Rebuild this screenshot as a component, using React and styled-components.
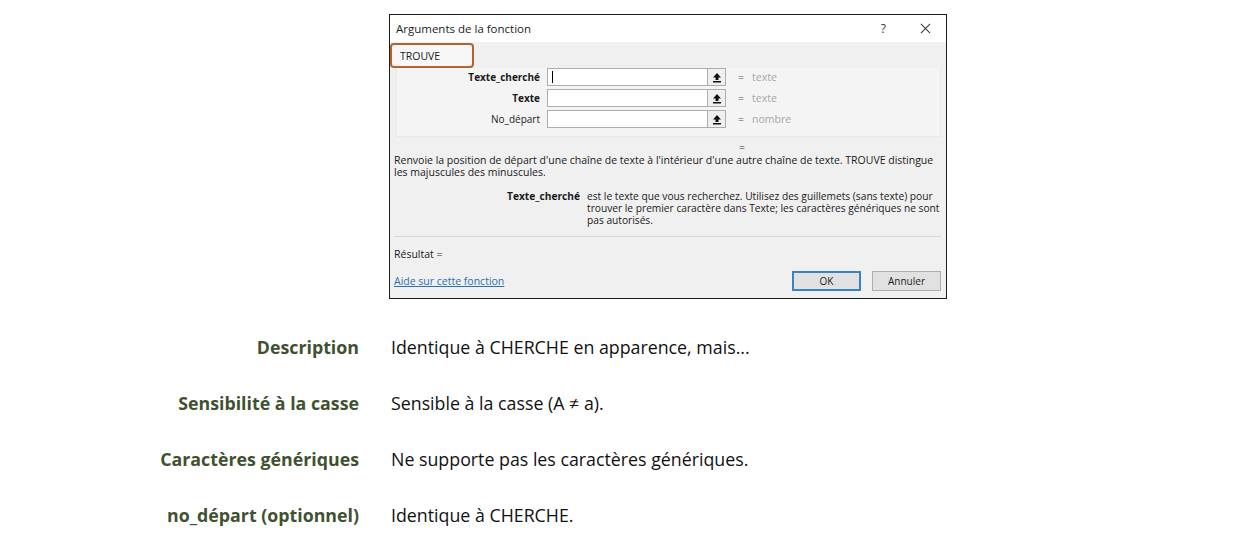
import React from "react";
import styled, { createGlobalStyle } from "styled-components";

const GlobalStyle = createGlobalStyle`
  body {
    margin: 0;
    background: #ffffff;
    font-family: "Open Sans", "Noto Sans", sans-serif;
  }
`;

const args = [
  { name: "Texte_cherché", bold: true, value: "texte", focused: true },
  { name: "Texte", bold: true, value: "texte" },
  { name: "No_départ", bold: false, value: "nombre" },
];

const rows = [
  { label: "Description", text: "Identique à CHERCHE en apparence, mais..." },
  { label: "Sensibilité à la casse", text: "Sensible à la casse (A ≠ a)." },
  { label: "Caractères génériques", text: "Ne supporte pas les caractères génériques." },
  { label: "no_départ (optionnel)", text: "Identique à CHERCHE." },
];

const UpArrow = () => (
  <svg width="10" height="11" viewBox="0 0 10 11">
    <path d="M5 1 L9 5.5 H6.5 V8 H3.5 V5.5 H1 Z" fill="#111" />
    <rect x="1" y="9" width="8" height="1.5" fill="#111" />
  </svg>
);

const App = () => {
  return (
    <Page>
      <GlobalStyle />
      <Dialog>
        <TitleBar>
          <Title>Arguments de la fonction</Title>
          <TitleButtons>
            <span>?</span>
            <CloseIcon viewBox="0 0 12 12">
              <path d="M1 1 L11 11 M11 1 L1 11" stroke="#333" strokeWidth="1.1" />
            </CloseIcon>
          </TitleButtons>
        </TitleBar>
        <Body>
          <FunctionName>TROUVE</FunctionName>
          <ArgPanel>
            {args.map((a) => (
              <ArgRow key={a.name}>
                <ArgLabel $bold={a.bold}>{a.name}</ArgLabel>
                <ArgInput>{a.focused && <Caret />}</ArgInput>
                <RefButton>
                  <UpArrow />
                </RefButton>
                <Equals>=</Equals>
                <ArgValue>{a.value}</ArgValue>
              </ArgRow>
            ))}
          </ArgPanel>
          <ResultEq>=</ResultEq>
          <Summary>
            Renvoie la position de départ d'une chaîne de texte à l'intérieur d'une autre
            chaîne de texte. TROUVE distingue les majuscules des minuscules.
          </Summary>
          <ArgHelp>
            <ArgHelpName>Texte_cherché</ArgHelpName>
            <ArgHelpText>
              est le texte que vous recherchez. Utilisez des guillemets (sans texte) pour
              trouver le premier caractère dans Texte; les caractères génériques ne sont
              pas autorisés.
            </ArgHelpText>
          </ArgHelp>
          <Separator />
          <Result>Résultat =</Result>
          <Footer>
            <HelpLink>Aide sur cette fonction</HelpLink>
            <Buttons>
              <DialogButton $primary>OK</DialogButton>
              <DialogButton>Annuler</DialogButton>
            </Buttons>
          </Footer>
        </Body>
      </Dialog>

      <Table>
        {rows.map((r) => (
          <React.Fragment key={r.label}>
            <RowLabel>{r.label}</RowLabel>
            <RowText>{r.text}</RowText>
          </React.Fragment>
        ))}
      </Table>
    </Page>
  );
};

export default App;

const Page = styled.div`
  width: 1245px;
  height: 544px;
  overflow: hidden;
  padding-top: 14px;
  box-sizing: border-box;
`;

const Dialog = styled.div`
  margin-left: 389px;
  width: 558px;
  height: 285px;
  box-sizing: border-box;
  border: 1px solid #1a1a1a;
  background: #f0f0f0;
  font-family: "Open Sans", "Noto Sans", sans-serif;
  font-size: 10.5px;
  color: #1a1a1a;
  display: flex;
  flex-direction: column;
`;

const TitleBar = styled.div`
  height: 27px;
  background: #ffffff;
  display: flex;
  align-items: center;
  justify-content: space-between;
  padding: 0 15px 0 6px;
`;

const Title = styled.span`
  font-size: 11.5px;
  color: #222;
`;

const TitleButtons = styled.div`
  display: flex;
  align-items: center;
  gap: 34px;
  font-size: 12px;
  color: #333;
`;

const CloseIcon = styled.svg`
  width: 11px;
  height: 11px;
`;

const Body = styled.div`
  flex: 1;
  display: flex;
  flex-direction: column;
  padding: 1px 5px 0 4px;
`;

const FunctionName = styled.div`
  margin-left: -4px;
  width: 84px;
  height: 25px;
  box-sizing: border-box;
  border: 2px solid #b5632b;
  border-radius: 4px;
  background: #f7f7f7;
  padding-left: 8px;
  display: flex;
  align-items: center;
  font-size: 10.5px;
`;

const ArgPanel = styled.div`
  margin: 0 0 0 2px;
  padding: 0 0 8px;
  background: #f4f4f4;
  border: 1px solid #e9e9e9;
  border-top: none;
  display: flex;
  flex-direction: column;
  gap: 3px;
`;

const ArgRow = styled.div`
  display: flex;
  align-items: center;
  height: 18px;
`;

const ArgLabel = styled.div`
  width: 143px;
  text-align: right;
  padding-right: 7px;
  font-weight: ${(p) => (p.$bold ? 700 : 400)};
  font-size: 10px;
`;

const ArgInput = styled.div`
  width: 161px;
  height: 18px;
  box-sizing: border-box;
  background: #ffffff;
  border: 1px solid #adadad;
  display: flex;
  align-items: center;
  padding-left: 4px;
`;

const Caret = styled.span`
  width: 1px;
  height: 12px;
  background: #000;
`;

const RefButton = styled.div`
  width: 18px;
  height: 18px;
  box-sizing: border-box;
  border: 1px solid #adadad;
  border-left: none;
  background: #f0f0f0;
  display: flex;
  align-items: center;
  justify-content: center;
`;

const Equals = styled.span`
  margin-left: 12px;
  width: 14px;
  color: #555;
`;

const ArgValue = styled.span`
  color: #a6a6a6;
`;

const ResultEq = styled.div`
  margin: 5px 0 0 345px;
  height: 10px;
  line-height: 10px;
  color: #333;
`;

const Summary = styled.p`
  margin: 2px 0 0;
  line-height: 12px;
  width: 545px;
`;

const ArgHelp = styled.div`
  display: flex;
  margin-top: 12px;
  line-height: 12px;
  font-size: 10.2px;
`;

const ArgHelpName = styled.div`
  width: 186px;
  text-align: right;
  font-weight: 700;
  padding-right: 7px;
  flex-shrink: 0;
`;

const ArgHelpText = styled.div`
  width: 358px;
`;

const Separator = styled.hr`
  margin: 10px 0 0;
  border: none;
  border-top: 1px solid #d8d8d8;
`;

const Result = styled.div`
  margin-top: 10px;
`;

const Footer = styled.div`
  display: flex;
  justify-content: space-between;
  align-items: center;
  margin-top: 10px;
`;

const HelpLink = styled.a`
  color: #2c6fb3;
  text-decoration: underline;
  cursor: pointer;
`;

const Buttons = styled.div`
  display: flex;
  gap: 11px;
`;

const DialogButton = styled.button`
  all: unset;
  width: 69px;
  height: 20px;
  box-sizing: border-box;
  text-align: center;
  font-size: 10px;
  background: #e1e1e1;
  border: ${(p) => (p.$primary ? "2px solid #3c80c6" : "1px solid #adadad")};
  line-height: ${(p) => (p.$primary ? "16px" : "18px")};
  color: #222;
`;

const Table = styled.div`
  display: grid;
  grid-template-columns: 359px auto;
  column-gap: 32px;
  grid-auto-rows: 56px;
  margin-top: 20px;
  align-items: center;
  font-family: "Open Sans", "Noto Sans", sans-serif;
  font-size: 17.8px;
`;

const RowLabel = styled.div`
  text-align: right;
  font-weight: 700;
  color: #3f5230;
`;

const RowText = styled.div`
  color: #111;
`;
